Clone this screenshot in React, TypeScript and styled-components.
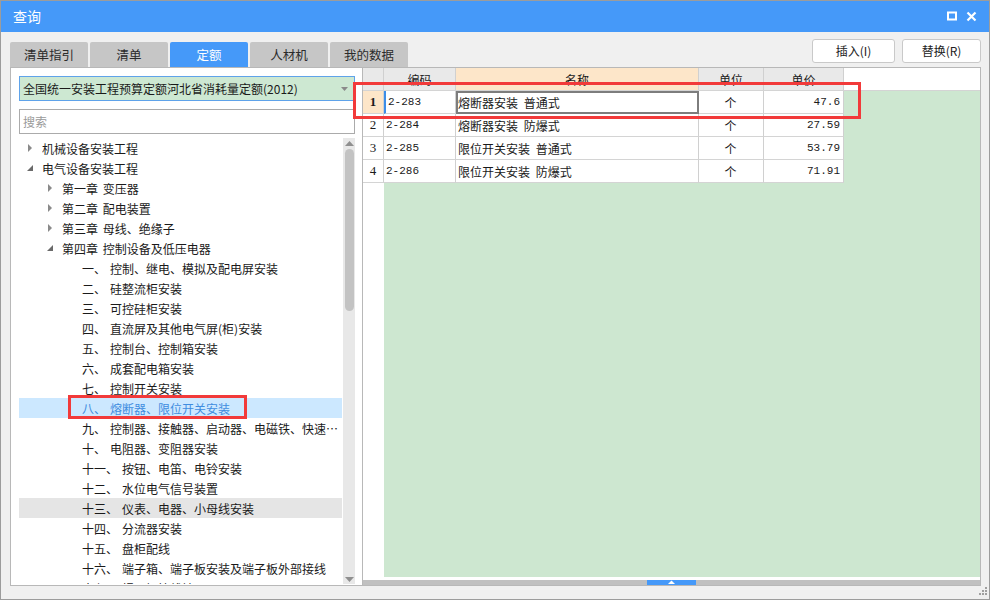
import styled, { createGlobalStyle } from "styled-components";

const GlobalStyle = createGlobalStyle`
  html,
  body {
    margin: 0;
    padding: 0;
    font-family: "Noto Sans CJK SC", "Liberation Sans", sans-serif;
    font-size: 12px;
    color: #1a1a1a;
  }

  * {
    box-sizing: border-box;
  }
`;

const BLUE = "#4599f9";

const Window = styled.div`
  position: relative;
  width: 990px;
  height: 600px;
  border: 1px solid #9c9c9c;
  background: #f0f0f0;
  display: flex;
  flex-direction: column;
`;

const TitleBar = styled.div`
  height: 31px;
  background: ${BLUE};
  color: #fff;
  display: flex;
  align-items: center;
  padding: 0 12px;
  font-size: 14px;
`;

const Title = styled.div`
  flex: 1;
`;

const TitleButtons = styled.div`
  display: flex;
  gap: 9px;
  align-items: center;
`;

const TopRow = styled.div`
  height: 36px;
  display: flex;
  padding: 0 8px 0 9px;
`;

const Tabs = styled.div`
  flex: 1;
  display: flex;
  gap: 2px;
  align-items: flex-end;
`;

const Tab = styled.div<{ $active?: boolean }>`
  width: 78px;
  height: 25px;
  border-radius: 2px 2px 0 0;
  display: flex;
  align-items: center;
  justify-content: center;
  font-size: 12.5px;
  background: ${(p) => (p.$active ? BLUE : "#c6c6c6")};
  color: ${(p) => (p.$active ? "#fff" : "#2b2b2b")};
`;

const Buttons = styled.div`
  display: flex;
  gap: 7px;
  padding-top: 7px;
`;

const Button = styled.div<{ $w: number }>`
  width: ${(p) => p.$w}px;
  height: 24px;
  border: 1px solid #c9c9c9;
  border-radius: 3px;
  background: #fff;
  display: flex;
  align-items: center;
  justify-content: center;
  font-size: 12px;
  color: #222;
`;

const Main = styled.div`
  height: 519px;
  display: flex;
  padding: 0 8px 0 9px;
`;

const LeftPanel = styled.div`
  width: 352px;
  background: #fff;
  border: 1px solid #b8b8b8;
  border-right: none;
  display: flex;
  flex-direction: column;
  padding: 8px 7px 0 8px;
`;

const Select = styled.div`
  height: 25px;
  border: 1px solid #5fa3ea;
  background: #cde8d2;
  display: flex;
  align-items: center;
  padding: 0 6px 0 3px;
  font-size: 12px;
`;

const SelectText = styled.div`
  flex: 1;
`;

const Search = styled.div`
  height: 25px;
  margin-top: 8px;
  border: 1px solid #ababab;
  display: flex;
  align-items: center;
  padding: 0 3px;
  color: #9a9a9a;
`;

const TreeArea = styled.div`
  flex: 1;
  margin-top: 4px;
  display: flex;
  min-height: 0;
  padding-bottom: 1px;
`;

const TreeList = styled.div`
  flex: 1;
  overflow: hidden;
`;

const TreeRow = styled.div<{ $level: number; $state?: "selected" | "hover" }>`
  height: 20px;
  display: flex;
  align-items: center;
  padding-left: ${(p) => 7 + p.$level * 20}px;
  white-space: nowrap;
  word-spacing: 2px;
  background: ${(p) =>
    p.$state === "selected" ? "#cce8ff" : p.$state === "hover" ? "#e5e5e5" : "transparent"};
  color: ${(p) => (p.$state === "selected" ? "#3f8de0" : "#1a1a1a")};
`;

const Toggle = styled.div`
  width: 16px;
  flex-shrink: 0;
  display: flex;
  align-items: center;
`;

const TreeText = styled.div`
  overflow: hidden;
  text-overflow: ellipsis;
`;

const Num = styled.span`
  margin-right: 4px;
`;

const VScroll = styled.div`
  width: 12px;
  flex-shrink: 0;
  margin-left: 1px;
  background: #e8e8e8;
  display: flex;
  flex-direction: column;
  align-items: center;
  padding: 3px 0 2px;
`;

const Thumb = styled.div`
  width: 9px;
  height: 162px;
  margin-top: 3px;
  border-radius: 5px;
  background: #c3c3c3;
`;

const ScrollSpacer = styled.div`
  flex: 1;
`;

const RightPanel = styled.div`
  flex: 1;
  border: 1px solid #b8b8b8;
  background: #fff;
  display: flex;
  flex-direction: column;
`;

const GridHeader = styled.div`
  height: 23px;
  display: flex;
  border-bottom: 1px solid #d4d4d4;
`;

const RowNumHead = styled.div`
  width: 21px;
  background: #e9e9e9;
  border-right: 1px solid #d0d0d0;
`;

const Cols = styled.div`
  display: grid;
  grid-template-columns: 72px 243px 65px 80px;
`;

const HeadCell = styled.div<{ $hot?: boolean }>`
  background: ${(p) => (p.$hot ? "#fde6c9" : "#e9e9e9")};
  border-right: 1px solid #d0d0d0;
  display: flex;
  align-items: center;
  justify-content: center;
  font-size: 12px;
`;

const GridBody = styled.div`
  flex: 1;
  display: flex;
  min-height: 0;
`;

const RowNums = styled.div`
  width: 21px;
  background: #fff;
`;

const RowNum = styled.div<{ $current?: boolean }>`
  height: 23px;
  border-right: 1px solid #d0d0d0;
  border-bottom: 1px solid #d4d4d4;
  display: flex;
  align-items: center;
  justify-content: center;
  font-family: "Liberation Serif", serif;
  font-size: 13px;
  font-weight: ${(p) => (p.$current ? "bold" : "normal")};
  background: ${(p) => (p.$current ? "#fde6c9" : "#fff")};
`;

const DataArea = styled.div`
  flex: 1;
  background: #cde7d0;
`;

const DataRow = styled(Cols)`
  height: 23px;
`;

const Cell = styled.div<{ $align?: "left" | "center" | "right"; $mono?: boolean; $focus?: boolean; $lead?: boolean }>`
  background: #fff;
  border-right: 1px solid #d0d0d0;
  border-bottom: 1px solid #d4d4d4;
  display: flex;
  align-items: center;
  justify-content: ${(p) =>
    p.$align === "right" ? "flex-end" : p.$align === "center" ? "center" : "flex-start"};
  padding: 0 3px 0 2px;
  white-space: pre;
  word-spacing: 3px;
  font-family: ${(p) =>
    p.$mono ? '"Liberation Mono", monospace' : '"Noto Sans CJK SC", sans-serif'};
  font-size: ${(p) => (p.$mono ? "11px" : "12px")};
  border-left: ${(p) => (p.$lead ? "2px solid #3d8ee8" : "none")};
  outline: ${(p) => (p.$focus ? "2px solid #7d7d7d" : "none")};
  outline-offset: -2px;
  box-shadow: ${(p) => (p.$focus ? "inset 0 1px 0 #3d8ee8" : "none")};
`;

const HGap = styled.div`
  height: 3px;
  background: #fff;
`;

const HScroll = styled.div`
  height: 5px;
  background: #c0c0c0;
  display: flex;
  padding-left: 284px;
`;

const HThumb = styled.div`
  width: 49px;
  height: 5px;
  background: ${BLUE};
  display: flex;
  justify-content: center;
`;

const BottomBar = styled.div`
  flex: 1;
  display: flex;
  justify-content: flex-end;
  align-items: flex-end;
  padding: 0 1px 3px 0;
`;

const Mark = styled.div`
  position: absolute;
  border: 3px solid #f23a3a;
`;

const tree: { level: number; text: string; num?: string; toggle?: "open" | "closed"; state?: "selected" | "hover" }[] = [
  { level: 0, text: "机械设备安装工程", toggle: "closed" },
  { level: 0, text: "电气设备安装工程", toggle: "open" },
  { level: 1, text: "第一章 变压器", toggle: "closed" },
  { level: 1, text: "第二章 配电装置", toggle: "closed" },
  { level: 1, text: "第三章 母线、绝缘子", toggle: "closed" },
  { level: 1, text: "第四章 控制设备及低压电器", toggle: "open" },
  { level: 2, num: "一、", text: "控制、继电、模拟及配电屏安装" },
  { level: 2, num: "二、", text: "硅整流柜安装" },
  { level: 2, num: "三、", text: "可控硅柜安装" },
  { level: 2, num: "四、", text: "直流屏及其他电气屏(柜)安装" },
  { level: 2, num: "五、", text: "控制台、控制箱安装" },
  { level: 2, num: "六、", text: "成套配电箱安装" },
  { level: 2, num: "七、", text: "控制开关安装" },
  { level: 2, num: "八、", text: "熔断器、限位开关安装", state: "selected" },
  { level: 2, num: "九、", text: "控制器、接触器、启动器、电磁铁、快速自动开关安装" },
  { level: 2, num: "十、", text: "电阻器、变阻器安装" },
  { level: 2, num: "十一、", text: "按钮、电笛、电铃安装" },
  { level: 2, num: "十二、", text: "水位电气信号装置" },
  { level: 2, num: "十三、", text: "仪表、电器、小母线安装", state: "hover" },
  { level: 2, num: "十四、", text: "分流器安装" },
  { level: 2, num: "十五、", text: "盘柜配线" },
  { level: 2, num: "十六、", text: "端子箱、端子板安装及端子板外部接线" },
  { level: 2, num: "十七、", text: "焊压铜接线端子" },
];

const rows = [
  { code: "2-283", name: "熔断器安装 普通式", unit: "个", price: "47.6" },
  { code: "2-284", name: "熔断器安装 防爆式", unit: "个", price: "27.59" },
  { code: "2-285", name: "限位开关安装 普通式", unit: "个", price: "53.79" },
  { code: "2-286", name: "限位开关安装 防爆式", unit: "个", price: "71.91" },
];

function Arrow({ open }: { open?: boolean }) {
  return open ? (
    <svg width="8" height="8" viewBox="0 0 8 8">
      <path d="M7 1 L7 7 L1 7 Z" fill="#6a6a6a" />
    </svg>
  ) : (
    <svg width="8" height="10" viewBox="0 0 8 10">
      <path d="M2 1 L6 5 L2 9 Z" fill="#8a8a8a" />
    </svg>
  );
}

export default function App() {
  return (
    <>
      <GlobalStyle />
      <Window>
        <TitleBar>
          <Title>查询</Title>
          <TitleButtons>
            <svg width="10" height="10" viewBox="0 0 10 10">
              <rect x="1" y="1.5" width="8" height="7" fill="none" stroke="#fff" strokeWidth="2" />
            </svg>
            <svg width="11" height="11" viewBox="0 0 11 11">
              <path d="M1.5 1.5 L9.5 9.5 M9.5 1.5 L1.5 9.5" stroke="#fff" strokeWidth="2.2" />
            </svg>
          </TitleButtons>
        </TitleBar>

        <TopRow>
          <Tabs>
            <Tab>清单指引</Tab>
            <Tab>清单</Tab>
            <Tab $active>定额</Tab>
            <Tab>人材机</Tab>
            <Tab>我的数据</Tab>
          </Tabs>
          <Buttons>
            <Button $w={83}>插入(I)</Button>
            <Button $w={79}>替换(R)</Button>
          </Buttons>
        </TopRow>

        <Main>
          <LeftPanel>
            <Select>
              <SelectText>全国统一安装工程预算定额河北省消耗量定额(2012)</SelectText>
              <svg width="7" height="4" viewBox="0 0 7 4">
                <path d="M0 0 L7 0 L3.5 4 Z" fill="#8a8a8a" />
              </svg>
            </Select>
            <Search>搜索</Search>
            <TreeArea>
              <TreeList>
                {tree.map((t, i) => (
                  <TreeRow key={i} $level={t.level} $state={t.state}>
                    <Toggle>{t.toggle && <Arrow open={t.toggle === "open"} />}</Toggle>
                    <TreeText>
                      {t.num && <Num>{t.num}</Num>}
                      {t.text}
                    </TreeText>
                  </TreeRow>
                ))}
              </TreeList>
              <VScroll>
                <svg width="9" height="5" viewBox="0 0 9 5">
                  <path d="M0 5 L4.5 0 L9 5 Z" fill="#8f8f8f" />
                </svg>
                <Thumb />
                <ScrollSpacer />
                <svg width="9" height="5" viewBox="0 0 9 5">
                  <path d="M0 0 L9 0 L4.5 5 Z" fill="#8f8f8f" />
                </svg>
              </VScroll>
            </TreeArea>
          </LeftPanel>

          <RightPanel>
            <GridHeader>
              <RowNumHead />
              <Cols>
                <HeadCell>编码</HeadCell>
                <HeadCell $hot>名称</HeadCell>
                <HeadCell>单位</HeadCell>
                <HeadCell>单价</HeadCell>
              </Cols>
            </GridHeader>
            <GridBody>
              <RowNums>
                {rows.map((_, i) => (
                  <RowNum key={i} $current={i === 0}>
                    {i + 1}
                  </RowNum>
                ))}
              </RowNums>
              <DataArea>
                {rows.map((r, i) => (
                  <DataRow key={r.code}>
                    <Cell $mono $lead={i === 0}>{r.code}</Cell>
                    <Cell $focus={i === 0}>{r.name}</Cell>
                    <Cell $align="center">{r.unit}</Cell>
                    <Cell $align="right" $mono>{r.price}</Cell>
                  </DataRow>
                ))}
              </DataArea>
            </GridBody>
            <HGap />
            <HScroll>
              <HThumb>
                <svg width="7" height="4" viewBox="0 0 7 4">
                  <path d="M0 4 L3.5 0.5 L7 4 Z" fill="#fff" />
                </svg>
              </HThumb>
            </HScroll>
          </RightPanel>
        </Main>

        <BottomBar>
          <svg width="10" height="10" viewBox="0 0 10 10">
            <rect x="7" y="1" width="2" height="2" fill="#a0a0a0" />
            <rect x="4" y="4" width="2" height="2" fill="#a0a0a0" />
            <rect x="7" y="4" width="2" height="2" fill="#a0a0a0" />
            <rect x="1" y="7" width="2" height="2" fill="#a0a0a0" />
            <rect x="4" y="7" width="2" height="2" fill="#a0a0a0" />
            <rect x="7" y="7" width="2" height="2" fill="#a0a0a0" />
          </svg>
        </BottomBar>

        <Mark style={{ left: 352, top: 81, width: 508, height: 37 }} />
        <Mark style={{ left: 67, top: 394, width: 179, height: 24 }} />
      </Window>
    </>
  );
}
